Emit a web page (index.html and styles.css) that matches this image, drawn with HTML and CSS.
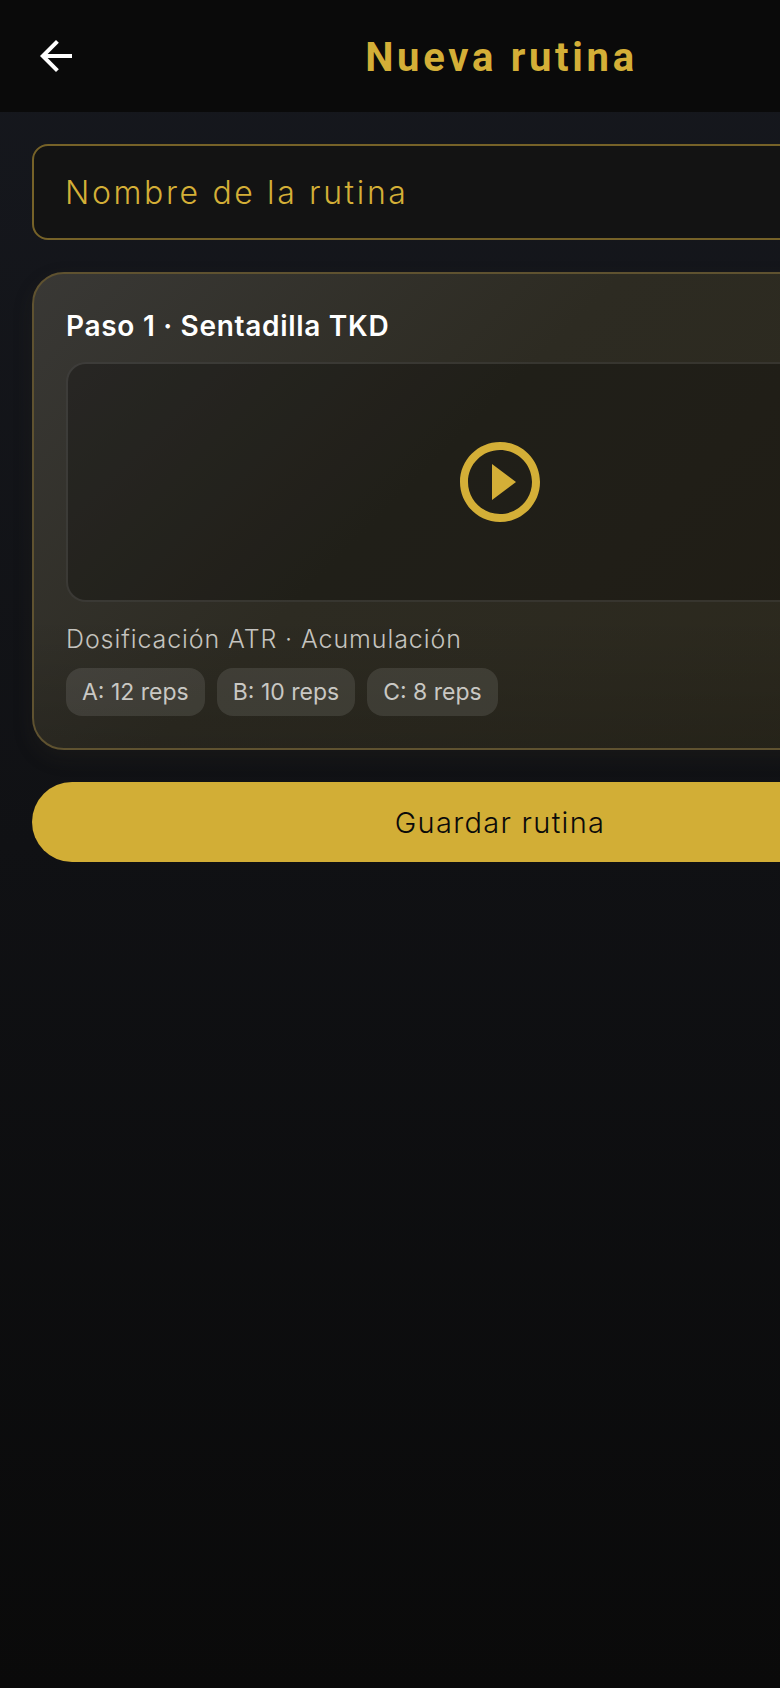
FILE: index.html
```html
<!DOCTYPE html>
<html lang="es">
<head>
<meta charset="utf-8">
<title>Nueva rutina</title>
<link rel="stylesheet" href="styles.css">
</head>
<body>
<div class="app">
  <header class="topbar">
    <svg class="back" viewBox="0 0 24 24" aria-hidden="true"><path d="M20 11H7.83l5.59-5.59L12 4l-8 8 8 8 1.41-1.41L7.83 13H20v-2z"/></svg>
    <h1 class="title">Nueva rutina</h1>
  </header>
  <main class="content">
    <div class="name-field">Nombre de la rutina</div>
    <section class="card">
      <h2 class="step-title">Paso 1 · Sentadilla TKD</h2>
      <div class="video">
        <svg class="play" viewBox="0 0 24 24" aria-hidden="true"><path d="M10 16.5l6-4.5-6-4.5v9zM12 2C6.48 2 2 6.48 2 12s4.48 10 10 10 10-4.48 10-10S17.52 2 12 2zm0 18c-4.41 0-8-3.59-8-8s3.59-8 8-8 8 3.59 8 8-3.59 8-8 8z"/></svg>
      </div>
      <p class="dose">Dosificación ATR · Acumulación</p>
      <div class="chips">
        <span class="chip">A: 12 reps</span>
        <span class="chip">B: 10 reps</span>
        <span class="chip">C: 8 reps</span>
      </div>
    </section>
    <button class="save" type="button">Guardar rutina</button>
  </main>
</div>
</body>
</html>
```
FILE: styles.css
```css
html, body {
  margin: 0;
  padding: 0;
  width: 780px;
  height: 1688px;
  overflow: hidden;
  background: #0a0a0a;
}
.app {
  width: 1000px;
  height: 1688px;
  font-family: Inter, "Noto Sans", sans-serif;
  background: linear-gradient(180deg, #16181e 0%, #0a0a0a 100%);
}
.topbar {
  box-sizing: border-box;
  height: 112px;
  padding: 2px 0 0 3px;
  display: flex;
  align-items: center;
  justify-content: center;
  position: relative;
  background: #0a0a0a;
}
.back {
  position: absolute;
  left: 32px;
  top: 32px;
  width: 48px;
  height: 48px;
  fill: #fff;
}
.title {
  margin: 0;
  font-family: Roboto, sans-serif;
  font-size: 40px;
  font-weight: 700;
  letter-spacing: 3.7px;
  color: #d4af37;
}
.content {
  padding: 32px;
  display: flex;
  flex-direction: column;
  gap: 32px;
}
.name-field {
  box-sizing: border-box;
  height: 96px;
  border: 2px solid #766228;
  border-radius: 16px;
  background: #131313;
  padding: 0 31px;
  display: flex;
  align-items: center;
  font-size: 32px;
  font-weight: 300;
  letter-spacing: 2.63px;
  color: #d4af37;
}
.card {
  box-sizing: border-box;
  height: 478px;
  border: 2px solid #5f5230;
  border-radius: 32px;
  padding: 32px;
  background: linear-gradient(180deg, rgba(0, 0, 0, 0) 72%, rgba(0, 0, 0, 0.14) 100%), linear-gradient(135deg, #393835 0%, #2d2b22 42%, #2b281c 100%);
  box-shadow: 0 8px 20px rgba(60, 55, 40, 0.18);
}
.step-title {
  margin: 0;
  height: 40px;
  line-height: 40px;
  font-size: 28px;
  font-weight: 600;
  letter-spacing: 0.7px;
  color: #fff;
}
.video {
  box-sizing: border-box;
  height: 240px;
  margin-top: 16px;
  border: 2px solid rgba(255, 255, 255, 0.1);
  border-radius: 20px;
  background: rgba(0, 0, 0, 0.27);
  display: flex;
  align-items: center;
  justify-content: center;
}
.play {
  width: 96px;
  height: 96px;
  fill: #d4af37;
}
.dose {
  margin: 21px 0 13px;
  height: 32px;
  line-height: 32px;
  font-size: 25px;
  font-weight: 300;
  letter-spacing: 0.9px;
  color: #c4c3bf;
}
.chips {
  display: flex;
  gap: 12px;
}
.chip {
  box-sizing: border-box;
  height: 48px;
  padding: 0 16px;
  border-radius: 16px;
  background: rgba(255, 255, 255, 0.1);
  display: flex;
  align-items: center;
  font-size: 23px;
  color: #c9c8c4;
}
.save {
  height: 80px;
  border: 0;
  border-radius: 40px;
  background: #d2ae36;
  color: #0a0a0a;
  font-family: inherit;
  font-size: 29px;
  font-weight: 300;
  letter-spacing: 1.3px;
  padding: 0;
}
```
